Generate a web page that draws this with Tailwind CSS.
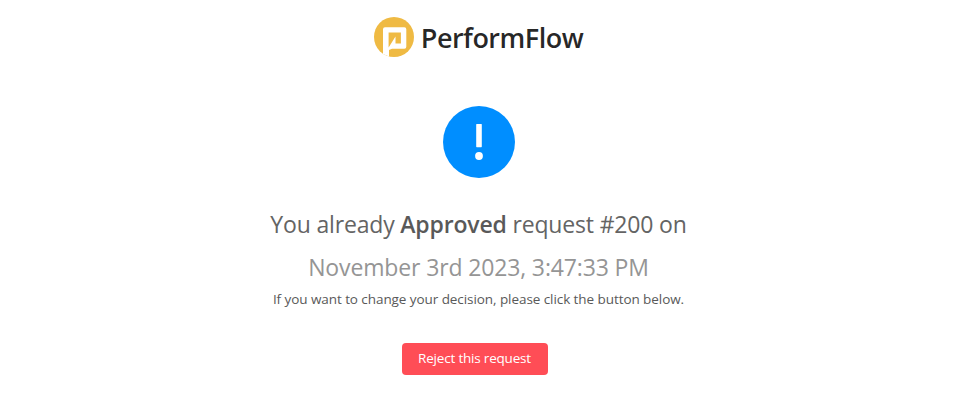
<!DOCTYPE html>
<html lang="en">
<head>
    <meta charset="UTF-8">
    <meta name="viewport" content="width=device-width, initial-scale=1.0">
    <title>PerformFlow</title>
    <script src="https://cdn.jsdelivr.net/npm/@tailwindcss/browser@4"></script>
</head>
<body class="bg-white font-['Open_Sans','Noto_Sans',sans-serif]">

    <main class="flex flex-col items-center whitespace-nowrap pt-[17px]">

        <!-- Brand -->
        <header class="flex h-10 items-center gap-[7px]">
            <svg class="size-10" viewBox="0 0 40 40">
                <circle cx="20" cy="20" r="20" fill="#efba43"/>
                <path fill="#fff" fill-rule="evenodd" d="M11 10.2H30.3Q32.3 10.2 32.3 12.2V29.8Q32.3 31.8 30.3 31.8H18L15 33V39.4L9 37V12.2Q9 10.2 11 10.2ZM14.6 15.4V30.5L21.5 19.5V26.5H26.9V15.4Z"/>
            </svg>
            <h1 class="mt-0.5 text-[27px] leading-10 font-semibold tracking-[-0.5px] text-black/85">PerformFlow</h1>
        </header>

        <!-- Status icon -->
        <svg class="mt-[49px] size-[72px]" viewBox="0 0 72 72">
            <circle cx="36" cy="36" r="36" fill="#008eff"/>
            <rect x="33.2" y="18" width="5.6" height="23.2" rx="0.6" fill="#fff"/>
            <circle cx="36" cy="50" r="3.9" fill="#fff"/>
        </svg>

        <!-- Message -->
        <h2 class="mt-[25px] text-[23px] leading-[43px] tracking-[-0.17px] text-[#646464]">You already <strong class="font-semibold text-[#595959]">Approved</strong> request #200 on</h2>
        <p class="text-[23px] leading-[43px] tracking-[-0.14px] text-[#959595]">November 3rd 2023, 3:47:33 PM</p>
        <p class="text-[13.5px] leading-[21px] tracking-[-0.07px] text-[#595959]">If you want to change your decision, please click the button below.</p>

        <button type="button" class="mt-[33px] mr-[8px] h-8 w-[146px] rounded-[4px] bg-[#ff4d56] pb-px text-[13.5px] tracking-[-0.2px] text-white">Reject this request</button>
    </main>

</body>
</html>
